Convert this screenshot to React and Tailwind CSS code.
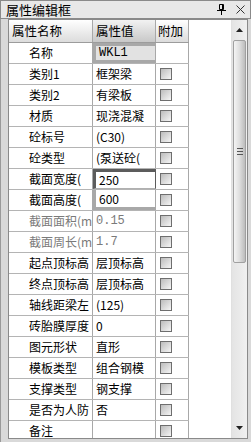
import React from 'react';

const rows = [
  { name: '名称', value: 'WKL1', mono: true, box: 'single', noCheck: true },
  { name: '类别1', value: '框架梁' },
  { name: '类别2', value: '有梁板' },
  { name: '材质', value: '现浇混凝' },
  { name: '砼标号', value: '(C30)' },
  { name: '砼类型', value: '(泵送砼(' },
  { name: '截面宽度(', value: '250', box: 'top' },
  { name: '截面高度(', value: '600', box: 'bottom' },
  { name: '截面面积(m', value: '0.15', mono: true, muted: true },
  { name: '截面周长(m', value: '1.7', mono: true, muted: true },
  { name: '起点顶标高', value: '层顶标高' },
  { name: '终点顶标高', value: '层顶标高' },
  { name: '轴线距梁左', value: '(125)' },
  { name: '砖胎膜厚度', value: '0' },
  { name: '图元形状', value: '直形' },
  { name: '模板类型', value: '组合钢模' },
  { name: '支撑类型', value: '钢支撑' },
  { name: '是否为人防', value: '否' },
  { name: '备注', value: '' },
];

const boxClass = {
  single: 'border-[3px] border-[#5c5c5c] bg-[#e2e2e2] pl-0',
  top: 'border-x-[3px] border-t-[3px] border-b border-x-[#5c5c5c] border-t-[#5c5c5c] border-b-[#b0b0b0] pl-0',
  bottom: 'border-x-[3px] border-b-[3px] border-[#5c5c5c] pl-0',
};

function Checkbox() {
  return (
    <div className="w-[12px] h-[12px] border border-[#6e6e6e] bg-gradient-to-br from-[#bcbcbc] to-[#f6f6f6]" />
  );
}

function PinIcon() {
  return (
    <svg width="10" height="11" viewBox="0 0 10 11" className="block">
      <path d="M2.5 0.5h4v5h-4z" fill="none" stroke="#000" />
      <path d="M5.5 1v4.5" stroke="#000" />
      <path d="M0 6.5h9" stroke="#000" />
      <path d="M4.5 7v4" stroke="#000" />
    </svg>
  );
}

function Row({ row }) {
  const text = row.muted ? 'text-[#7a7a7a]' : 'text-black';
  return (
    <div className="flex h-[21px] border-b border-[#b4b4b4] text-[12px]">
      <div className={`w-[84px] shrink-0 border-r border-[#a8a8a8] pl-[20px] flex items-center overflow-hidden whitespace-nowrap ${text}`}>
        <span>{row.name}</span>
      </div>
      <div
        className={`w-[63px] shrink-0 border-r border-[#a8a8a8] pl-[3px] flex items-center overflow-hidden whitespace-nowrap ${text} ${row.box ? boxClass[row.box] : ''} ${row.mono ? "font-['Liberation_Mono',monospace]" : ''}`}
      >
        <span>{row.value}</span>
      </div>
      <div className="w-[33px] shrink-0 border-r border-[#a8a8a8] pl-[4px] flex items-center">
        {!row.noCheck && <Checkbox />}
      </div>
    </div>
  );
}

export default function App() {
  return (
    <div className="w-[251px] h-[442px] overflow-hidden bg-[#d9d9d9] text-[12.5px] leading-none font-['Noto_Sans_CJK_SC','Noto_Sans',sans-serif]">
      <div className="h-[19px] border border-[#8a8a8a] bg-[#e8e8e8] flex items-center pl-[5px] pr-[5px]">
        <span className="text-[13px] text-black">属性编辑框</span>
        <span className="ml-auto mr-[9px]"><PinIcon /></span>
        <svg width="9" height="9" viewBox="0 0 9 9" className="block">
          <path d="M0.5 0.5l8 8M8.5 0.5l-8 8" stroke="#333" />
        </svg>
      </div>
      <div className="h-[423px] pl-[7px] pr-[3px] pb-[3px] border-l border-[#9a9a9a]">
        <div className="h-full flex border border-[#8a8a8a] bg-white overflow-hidden">
          <div className="w-[180px] shrink-0">
            <div className="flex h-[23px] border-b border-[#9c9c9c]">
              <div className="w-[84px] border-r border-[#a8a8a8] pl-[3px] flex items-center bg-gradient-to-b from-white to-[#dcdcdc]">属性名称</div>
              <div className="w-[63px] border-r border-[#a8a8a8] pl-[3px] flex items-center bg-gradient-to-b from-[#f2f2f2] to-[#c8c8c8]">属性值</div>
              <div className="w-[33px] border-r border-[#a8a8a8] pl-[2px] flex items-center bg-gradient-to-b from-white to-[#dcdcdc]">附加</div>
            </div>
            {rows.map((r) => (
              <Row key={r.name} row={r} />
            ))}
          </div>
          <div className="flex-1" />
          <div className="w-[16px] shrink-0 bg-gradient-to-r from-[#e4e4e4] to-[#f0f0f0] flex flex-col border-l border-[#e0e0e0]">
            <div className="h-[20px] flex items-center justify-center">
              <svg width="7" height="4" viewBox="0 0 7 4"><path d="M0 4L3.5 0L7 4z" fill="#222" /></svg>
            </div>
            <div className="h-[223px] mx-[1px] rounded-[2px] border border-[#a0a0a0] bg-gradient-to-r from-[#f4f4f4] via-[#dedede] to-[#bcbcbc] flex items-center justify-center">
              <div className="flex flex-col gap-[2px]">
                <div className="w-[6px] h-[1px] bg-[#555]" />
                <div className="w-[6px] h-[1px] bg-[#555]" />
                <div className="w-[6px] h-[1px] bg-[#555]" />
              </div>
            </div>
            <div className="flex-1" />
            <div className="h-[20px] flex items-center justify-center">
              <svg width="7" height="4" viewBox="0 0 7 4"><path d="M0 0L3.5 4L7 0z" fill="#222" /></svg>
            </div>
          </div>
        </div>
      </div>
    </div>
  );
}
